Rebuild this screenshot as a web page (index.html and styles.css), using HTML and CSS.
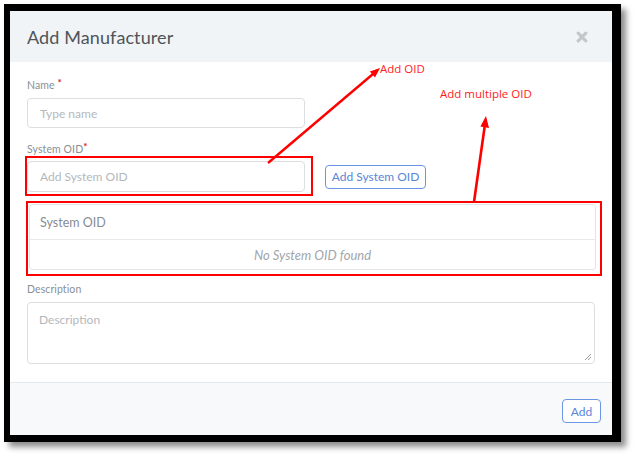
FILE: index.html
```html
<!DOCTYPE html>
<html>
<head>
<meta charset="utf-8">
<link rel="stylesheet" href="styles.css">
</head>
<body>
<div class="frame">
  <div class="modal">
    <div class="modal-header">
      <h1 class="title">Add Manufacturer</h1>
      <svg class="close" width="12" height="12" viewBox="0 0 12 12"><path d="M2.2 2.2 L9.8 9.8 M9.8 2.2 L2.2 9.8" stroke="#c3c7cb" stroke-width="3.2" stroke-linecap="round"/></svg>
    </div>
    <div class="modal-body">
      <div class="field">
        <label class="label">Name <span class="req">*</span></label>
        <div class="input w-half">Type name</div>
      </div>
      <div class="field">
        <label class="label">System OID<span class="req">*</span></label>
        <div class="row">
          <div class="input w-half tall">Add System OID</div>
          <button class="btn">Add System OID</button>
        </div>
      </div>
      <div class="table">
        <div class="th">System OID</div>
        <div class="td">No System OID found</div>
      </div>
      <div class="field">
        <label class="label">Description</label>
        <div class="textarea">Description
          <svg class="grip" width="8" height="8" viewBox="0 0 8 8"><path d="M7 1 L1 7 M7 4 L4 7" stroke="#999" stroke-width="1"/></svg>
        </div>
      </div>
    </div>
    <div class="modal-footer">
      <button class="btn small">Add</button>
    </div>
  </div>
</div>

<div class="box box-input"></div>
<div class="box box-table"></div>
<svg class="arrows" width="634" height="455" viewBox="0 0 634 455">
  <line x1="268" y1="163" x2="373" y2="74" stroke="#ff0000" stroke-width="2.4"/>
  <polygon points="380,68 375,77.5 369.8,71.5" fill="#ff0000"/>
  <line x1="474" y1="202" x2="484.6" y2="127" stroke="#ff0000" stroke-width="2.6"/>
  <polygon points="486,116 489,128 480.4,126.6" fill="#ff0000"/>
</svg>
<span class="note note1">Add OID</span>
<span class="note note2">Add multiple OID</span>
</body>
</html>
```

FILE: styles.css
```css
* { box-sizing: border-box; }
html, body { margin: 0; padding: 0; background: #ffffff; }
body { width: 634px; height: 455px; position: relative; overflow: hidden; font-family: "Lato", "Open Sans", sans-serif; }

.frame {
  margin: 4px 0 0 4px;
  width: 617px;
  height: 438px;
  border-style: solid;
  border-color: #000;
  border-width: 7px 9px 7px 6px;
  box-shadow: 5px 5px 6px rgba(0,0,0,0.45);
  background: #fff;
}
.modal { display: flex; flex-direction: column; height: 100%; }

.modal-header {
  height: 51px;
  flex: none;
  background: #f0f4f7;
  display: flex;
  align-items: center;
  justify-content: space-between;
  padding: 0 24px 0 17px;
}
.title { margin: 0; font-weight: 400; font-size: 18px; color: #4f5459; letter-spacing: 0.1px; }
.close { display: block; margin-top: 1px; }

.modal-body { flex: 1; padding: 17px 16px 0 17px; display: flex; flex-direction: column; }
.field { display: flex; flex-direction: column; }
.field + .field { margin-top: 15px; }
.label { font-size: 10.5px; line-height: 13px; color: #8a8f94; margin-bottom: 6px; letter-spacing: 0.1px; }
.req { color: #e02020; font-size: 10px; font-weight: 700; position: relative; top: -3px; }

.input {
  height: 30px;
  border: 1px solid #dcdfe2;
  border-radius: 4px;
  font-size: 12px;
  color: #b4b8bc;
  padding: 0 12px;
  display: flex;
  align-items: center;
}
.w-half { width: 278px; }
.tall { height: 31px; }
.row { display: flex; align-items: center; gap: 20px; margin-top: -1px; }

.btn {
  font-family: "Lato", "Open Sans", sans-serif;
  font-size: 12px;
  color: #5a86d8;
  background: #fff;
  border: 1px solid #6b97e2;
  border-radius: 4px;
  height: 24px;
  padding: 0;
  width: 101px;
  white-space: nowrap;
}
.btn.small { width: 39px; }

.table {
  margin-top: 12px;
  margin-left: 2px;
  border: 1px solid #e3e6e9;
  border-radius: 3px;
}
.th { height: 35px; display: flex; align-items: center; padding-left: 10px; font-size: 12.5px; color: #878c91; border-bottom: 1px solid #e6e9ec; }
.td { height: 29px; display: flex; align-items: center; justify-content: center; font-size: 13px; font-style: italic; color: #a2a6aa; }

.table + .field { margin-top: 13px; }
.textarea {
  position: relative;
  height: 62px;
  width: 568px;
  border: 1px solid #dcdfe2;
  border-radius: 4px;
  font-size: 12px;
  color: #b4b8bc;
  padding: 9px 11px;
}
.grip { position: absolute; right: 2px; bottom: 2px; }

.modal-footer {
  flex: none;
  height: 53px;
  background: #f8f9fb;
  border-top: 1px solid #e4e8eb;
  display: flex;
  justify-content: flex-end;
  align-items: flex-start;
  padding: 16px 11px 0 0;
}

.box { position: absolute; border: 2.5px solid #ff0000; }
.box-input { left: 25px; top: 156px; width: 288px; height: 40px; }
.box-table { left: 26px; top: 201px; width: 576px; height: 75px; }
.arrows { position: absolute; left: 0; top: 0; }
.note { position: absolute; font-family: "Open Sans", sans-serif; font-size: 11.5px; color: #ff1a1a; line-height: 14px; }
.note1 { left: 380px; top: 62px; }
.note2 { left: 440px; top: 87px; }
```
